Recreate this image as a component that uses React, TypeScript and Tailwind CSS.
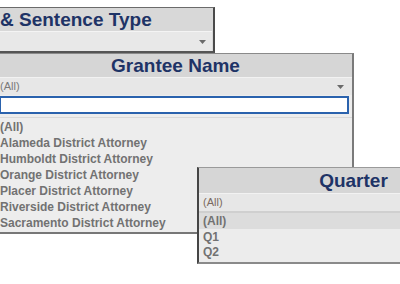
import React from "react";

const Arrow = () => (
  <svg width="7" height="4" viewBox="0 0 7 4" className="block">
    <polygon points="0,0 7,0 3.5,4" fill="#6a6a6a" />
  </svg>
);

const font = { fontFamily: '"Liberation Sans", Arial, sans-serif' };

export default function App() {
  const grantees = [
    "(All)",
    "Alameda District Attorney",
    "Humboldt District Attorney",
    "Orange District Attorney",
    "Placer District Attorney",
    "Riverside District Attorney",
    "Sacramento District Attorney",
  ];
  return (
    <div className="relative w-[400px] h-[284px] overflow-hidden bg-white" style={font}>
      {/* Panel 1 */}
      <div className="absolute left-[-2px] top-[7px] w-[217px] h-[46px] border border-[#6b6b6b] border-r-2 border-r-[#4a4a4a] border-b-2 border-b-[#555] bg-[#d8d8d8] flex flex-col">
        <div className="h-[23px] pl-[1px] text-[19px] font-bold leading-[24px] text-[#1e3366] whitespace-nowrap">
          &amp; Sentence Type
        </div>
        <div className="flex-1 mr-[1px] bg-[#e8e8e8] border-t border-[#f4f4f4] flex items-center justify-end pr-[6px]">
          <Arrow />
        </div>
      </div>

      {/* Panel 2 */}
      <div className="absolute left-[-2px] top-[53px] w-[356px] h-[181px] border border-[#8a8a8a] border-r-2 border-r-[#7a7a7a] border-b-2 border-b-[#777] bg-[#ededed] flex flex-col">
        <div className="h-[23px] bg-[#d6d6d6] text-center text-[19px] font-bold leading-[24px] text-[#1e3366] whitespace-nowrap">
          Grantee Name
        </div>
        <div className="h-[18px] bg-[#e7e7e7] border-t border-[#f2f2f2] flex items-center justify-between pl-[1px] pr-[8px]">
          <span className="text-[11px] text-[#7a7a7a]">(All)</span>
          <Arrow />
        </div>
        <div className="h-[18px] mt-[1px] mr-[3px] border-2 border-[#2a62ad] bg-white" />
        <div className="mt-[3px] border-t border-[#d9d9d9] pt-[1px] pl-[1px] flex flex-col">
          {grantees.map((g) => (
            <div key={g} className="h-[16px] text-[12px] font-bold leading-[16px] text-[#727272] whitespace-nowrap">
              {g}
            </div>
          ))}
        </div>
      </div>

      {/* Panel 3 */}
      <div className="absolute left-[197px] top-[167px] w-[312px] h-[97px] border border-[#9a9a9a] border-l-2 border-l-[#454545] border-b-2 border-b-[#8a8a8a] bg-[#ececec] flex flex-col">
        <div className="h-[25px] bg-[#d6d6d6] text-center text-[19px] font-bold leading-[26px] text-[#1e3366] whitespace-nowrap">
          Quarter
        </div>
        <div className="h-[18px] bg-[#e7e7e7] border-t border-[#f2f2f2] flex items-center pl-[4px]">
          <span className="text-[11px] text-[#7a6a60]">(All)</span>
        </div>
        <div className="h-[2px] bg-[#cfcfcf]" />
        <div className="flex flex-col">
          <div className="h-[16px] bg-[#dcdcdc] pl-[4px] text-[12px] font-bold leading-[16px] text-[#727272]">(All)</div>
          <div className="h-[16px] pl-[4px] text-[12px] font-bold leading-[16px] text-[#727272]">Q1</div>
          <div className="h-[15px] pl-[4px] text-[12px] font-bold leading-[15px] text-[#727272]">Q2</div>
        </div>
      </div>
    </div>
  );
}
